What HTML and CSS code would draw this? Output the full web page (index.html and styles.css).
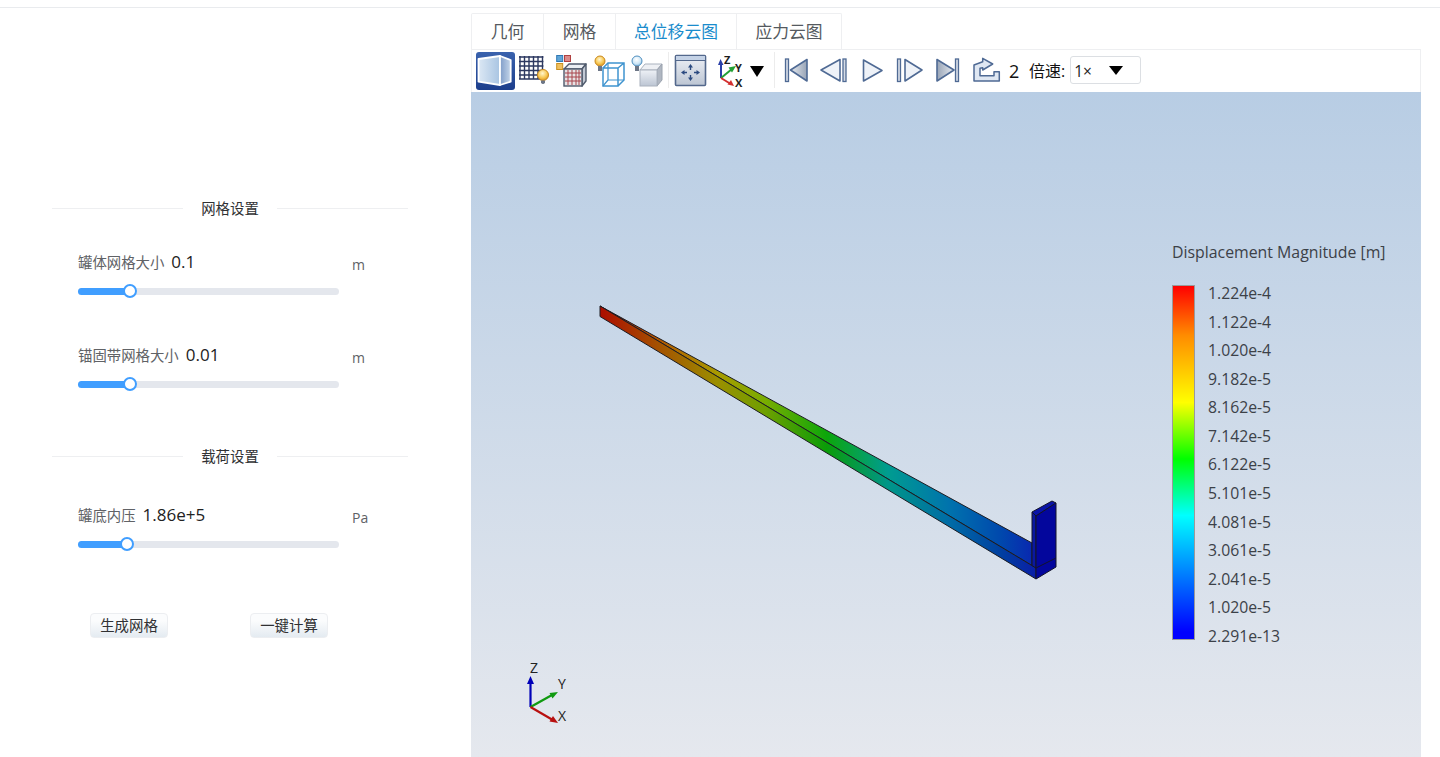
FILE: index.html
```html
<!DOCTYPE html>
<html lang="zh">
<head>
<meta charset="utf-8">
<title>计算</title>
<link rel="stylesheet" href="styles.css">
</head>
<body>
<div class="topbar"></div>
<div class="layout">
  <aside class="side">
    <div class="divider"><span>网格设置</span></div>
    <div class="field">
      <div class="field-main">
        <div class="field-head"><span class="field-label">罐体网格大小</span><span class="field-value">0.1</span></div>
        <div class="slider"><div class="slider-fill" style="width:20%"><i class="thumb"></i></div></div>
      </div>
      <span class="unit">m</span>
    </div>
    <div class="field field-next">
      <div class="field-main">
        <div class="field-head"><span class="field-label">锚固带网格大小</span><span class="field-value">0.01</span></div>
        <div class="slider"><div class="slider-fill" style="width:20%"><i class="thumb"></i></div></div>
      </div>
      <span class="unit">m</span>
    </div>
    <div class="divider divider-load"><span>载荷设置</span></div>
    <div class="field field-load">
      <div class="field-main">
        <div class="field-head"><span class="field-label">罐底内压</span><span class="field-value">1.86e+5</span></div>
        <div class="slider"><div class="slider-fill" style="width:18.8%"><i class="thumb"></i></div></div>
      </div>
      <span class="unit">Pa</span>
    </div>
    <div class="actions">
      <button class="btn">生成网格</button>
      <button class="btn">一键计算</button>
    </div>
  </aside>

  <main class="stage">
    <nav class="tabs">
      <a class="tab tab-f">几何</a>
      <a class="tab tab-s">网格</a>
      <a class="tab tab-m active">总位移云图</a>
      <a class="tab tab-l">应力云图</a>
    </nav>
    <div class="toolbar">
      <span class="tool tool-active">
        <svg viewBox="0 0 39 38" width="39" height="38">
          <defs>
            <linearGradient id="gL" x1="0" x2="1" y1="0" y2="0"><stop offset="0" stop-color="#dce8f4"/><stop offset="1" stop-color="#a8c4e2"/></linearGradient>
            <linearGradient id="gR" x1="0" x2="1" y1="0" y2="0"><stop offset="0" stop-color="#7f9cc8"/><stop offset="1" stop-color="#c5d6ea"/></linearGradient>
            <linearGradient id="gMed" x1="0" x2="1" y1="0" y2="0"><stop offset="0" stop-color="#e6eaf0"/><stop offset="1" stop-color="#98a4b6"/></linearGradient>
            <linearGradient id="gMedR" x1="0" x2="1" y1="0" y2="0"><stop offset="0" stop-color="#98a4b6"/><stop offset="1" stop-color="#e6eaf0"/></linearGradient>
            <linearGradient id="gBox" x1="0" x2="0" y1="0" y2="1"><stop offset="0" stop-color="#eef1f6"/><stop offset="1" stop-color="#bcc5d3"/></linearGradient>
            <radialGradient id="gBulb" cx=".45" cy=".35" r=".7"><stop offset="0" stop-color="#fff6cf"/><stop offset=".6" stop-color="#f7c64f"/><stop offset="1" stop-color="#d48a1c"/></radialGradient>
            <radialGradient id="gBulbB" cx=".45" cy=".35" r=".7"><stop offset="0" stop-color="#fff"/><stop offset=".6" stop-color="#cfe7f7"/><stop offset="1" stop-color="#7fb2d8"/></radialGradient>
            <linearGradient id="rainbowBeam" gradientUnits="userSpaceOnUse" x1="600" y1="0" x2="1036" y2="0">
              <stop offset="0" stop-color="#ac0d00"/><stop offset=".13" stop-color="#a55000"/><stop offset=".27" stop-color="#9b8f00"/><stop offset=".38" stop-color="#6ea000"/><stop offset=".52" stop-color="#0a9c08"/><stop offset=".66" stop-color="#009688"/><stop offset=".8" stop-color="#006ca6"/><stop offset=".92" stop-color="#003fa0"/><stop offset="1" stop-color="#0a1ea6"/>
            </linearGradient>
            <linearGradient id="rainbowTop" gradientUnits="userSpaceOnUse" x1="600" y1="0" x2="1036" y2="0">
              <stop offset="0" stop-color="#b81000"/><stop offset=".13" stop-color="#b45600"/><stop offset=".27" stop-color="#a99b00"/><stop offset=".38" stop-color="#78ad00"/><stop offset=".52" stop-color="#0ca60a"/><stop offset=".66" stop-color="#009c90"/><stop offset=".8" stop-color="#0073ad"/><stop offset=".92" stop-color="#0048ad"/><stop offset="1" stop-color="#0a24b0"/>
            </linearGradient>
          </defs>
          <path d="M2.500 7 24 4V33L2.500 29.700Z" fill="url(#gL)" stroke="#fff" stroke-width="1.800" stroke-linejoin="round"/>
          <path d="M24 4 34.700 8V29.700L24 33Z" fill="url(#gR)" stroke="#fff" stroke-width="1.800" stroke-linejoin="round"/>
        </svg>
      </span>
      <span class="tool">
        <svg viewBox="0 0 38 38" width="38" height="38">
          <path d="M5 4V27M9.500 4V27M14 4V27M18.500 4V27M23 4V27M27.500 4V27M4 5H28.500M4 9.500H28.500M4 14H28.500M4 18.500H28.500M4 23H28.500M4 27H28.500" stroke="#2c3860" stroke-width="1.400" fill="none"/>
          <circle cx="28" cy="23" r="5.500" fill="url(#gBulb)" stroke="#c9891f"/>
          <path d="M26 28.500H30V31L28.500 32H27.500L26 31Z" fill="#6d7686"/>
        </svg>
      </span>
      <span class="tool">
        <svg viewBox="0 0 38 38" width="38" height="38">
          <rect x="3.700" y="3.500" width="6" height="6" fill="#5fa5d8" stroke="#2f78b3"/>
          <rect x="11.500" y="3.500" width="6" height="6" fill="#d98a8a" stroke="#b04040"/>
          <rect x="3.700" y="11.500" width="6" height="6" fill="#f0c060" stroke="#c98f20"/>
          <path d="M11 17 16 12H33L29 17Z" fill="#eceff4" stroke="#4f5a6c" stroke-width="1.400" stroke-linejoin="round"/>
          <path d="M29 17 33 12V29L29 34Z" fill="#c2c9d4" stroke="#4f5a6c" stroke-width="1.400" stroke-linejoin="round"/>
          <rect x="11" y="17" width="18" height="17" fill="#e6e2e4" stroke="#4f5a6c" stroke-width="1.400"/>
          <path d="M15 18V33M19 18V33M23 18V33M26 18V33M12 21H28M12 25H28M12 29H28" stroke="#a8454d" stroke-width="1"/>
        </svg>
      </span>
      <span class="tool">
        <svg viewBox="0 0 38 38" width="38" height="38">
          <path d="M12 16H27V34H12ZM12 16 17 11H33V28L27 34M27 16 33 11" fill="none" stroke="#3f94cf" stroke-width="1.500"/>
          <path d="M17 11V28H33M17 28 12 34" fill="none" stroke="#3f94cf" stroke-width="1.200"/>
          <circle cx="9" cy="9" r="5" fill="url(#gBulb)" stroke="#c9891f"/>
          <rect x="7" y="14" width="4" height="5" fill="#6d7686"/>
        </svg>
      </span>
      <span class="tool">
        <svg viewBox="0 0 38 38" width="38" height="38">
          <path d="M11 18 16 12H33L28 18Z" fill="#eef0f4" stroke="#aab2be"/>
          <path d="M28 18 33 12V28L28 34Z" fill="#b0b7c2" stroke="#9aa2ae"/>
          <rect x="11" y="18" width="17" height="16" fill="url(#gBox)" stroke="#aab2be"/>
          <circle cx="8" cy="9" r="5" fill="url(#gBulbB)" stroke="#4f8fbf"/>
          <rect x="6" y="14" width="4" height="5" fill="#6d7686"/>
        </svg>
      </span>
      <span class="tool-sep"></span>
      <span class="tool">
        <svg viewBox="0 0 38 38" width="38" height="38">
          <rect x="3.500" y="3.500" width="30" height="30" rx="1" fill="url(#gBox)" stroke="#53688c" stroke-width="1.600"/>
          <rect x="4" y="4" width="29" height="4" fill="#c4d2e6"/>
          <path d="M3.500 8.500H33.500" stroke="#53688c"/>
          <path d="M18.500 12 16 15.500H17.800V18H19.200V15.500H21ZM18.500 29 16 25.500H17.800V23H19.200V25.500H21ZM9 20.500 12.500 18V19.800H15V21.200H12.500V23ZM28 20.500 24.500 18V19.800H22V21.200H24.500V23Z" fill="#2b4a80"/>
        </svg>
      </span>
      <span class="tool tool-axis">
        <svg viewBox="0 0 61 38" width="61" height="38">
          <path d="M9 26V11" stroke="#2a3fa8" stroke-width="2"/>
          <path d="M8.500 7 6 13H11.500Z" fill="#2a3fa8"/>
          <path d="M9 26 20 17" stroke="#23a035" stroke-width="2"/>
          <path d="M24 14 16.500 15.500 20 20.500Z" fill="#23a035"/>
          <path d="M9 26 18 31.500" stroke="#d32f2f" stroke-width="2"/>
          <path d="M22 34 19 28 15.500 32.500Z" fill="#d32f2f"/>
          <text class="axis-t" x="12" y="12">Z</text>
          <text class="axis-t" x="23" y="19.500">Y</text>
          <text class="axis-t" x="23" y="34.500">X</text>
          <path d="M38 14H52L45 25Z" fill="#000"/>
        </svg>
      </span>
      <span class="tool-sep tool-sep-b"></span>
      <span class="tool">
        <svg viewBox="0 0 38 38" width="38" height="38">
          <rect x="8.500" y="7" width="3" height="22.500" fill="#d5dbe5" stroke="#4f6a94" stroke-width="1.300"/>
          <path d="M30 7.500V29L13.500 18Z" fill="url(#gMed)" stroke="#4f6a94" stroke-width="1.600" stroke-linejoin="round"/>
        </svg>
      </span>
      <span class="tool">
        <svg viewBox="0 0 38 38" width="38" height="38">
          <rect x="28" y="7" width="3" height="22.500" fill="#d5dbe5" stroke="#4f6a94" stroke-width="1.300"/>
          <path d="M25 7.500V29L6 18Z" fill="#eef2f8" stroke="#4f6a94" stroke-width="1.600" stroke-linejoin="round"/>
        </svg>
      </span>
      <span class="tool">
        <svg viewBox="0 0 38 38" width="38" height="38">
          <path d="M10.500 8V29L29 18.500Z" fill="#eef2f8" stroke="#4f6a94" stroke-width="1.600" stroke-linejoin="round"/>
        </svg>
      </span>
      <span class="tool">
        <svg viewBox="0 0 38 38" width="38" height="38">
          <rect x="6.500" y="7" width="3" height="22.500" fill="#d5dbe5" stroke="#4f6a94" stroke-width="1.300"/>
          <path d="M14 7.500V29L31 18Z" fill="#eef2f8" stroke="#4f6a94" stroke-width="1.600" stroke-linejoin="round"/>
        </svg>
      </span>
      <span class="tool">
        <svg viewBox="0 0 38 38" width="38" height="38">
          <rect x="26.500" y="7" width="3" height="22.500" fill="#d5dbe5" stroke="#4f6a94" stroke-width="1.300"/>
          <path d="M8 7.500V29L25 18Z" fill="url(#gMedR)" stroke="#4f6a94" stroke-width="1.600" stroke-linejoin="round"/>
        </svg>
      </span>
      <span class="tool">
        <svg viewBox="0 0 38 38" width="38" height="38">
          <path d="M25.700 12 15.700 6.300V9.700L7 13V29H32.300V19.700H27V23.700H13V16.300L15.700 15.700V18Z" fill="#dfe7f2" stroke="#4f6a94" stroke-width="1.500" stroke-linejoin="round"/>
        </svg>
      </span>
      <span class="frame-no">2</span>
      <span class="speed-label">倍速:</span>
      <div class="speed-select"><span>1×</span><i class="caret"></i></div>
    </div>
    <section class="viewport">
      <svg class="scene" viewBox="471 92 950 665" width="950" height="665">
        <path d="M600 306 1032 543V565.500Z" fill="url(#rainbowTop)" stroke="#1c1c22" stroke-linejoin="round"/>
        <path d="M600 306 1036 568V579L600 316.500Z" fill="url(#rainbowBeam)" stroke="#1c1c22" stroke-linejoin="round"/>
        <path d="M1032 512 1036 516V568L1032 565.500Z" fill="#0a18a0" stroke="#14142a"/>
        <path d="M1032 512 1052 501 1056 503 1036 516Z" fill="#0a14a8" stroke="#14142a" stroke-linejoin="round"/>
        <path d="M1036 516 1056 503V567L1036 579Z" fill="#03069c" stroke="#14142a" stroke-linejoin="round"/>
        <path d="M1036 568 1056 558" stroke="#14142a" fill="none"/>

        <path d="M530.500 707V682" stroke="#0000b8" stroke-width="2.200"/>
        <path d="M530.500 676 527 684H534Z" fill="#0000b8"/>
        <path d="M530.500 707 552 695" stroke="#109a10" stroke-width="2.200"/>
        <path d="M558 692 549.500 693 552.500 698.500Z" fill="#109a10"/>
        <path d="M530.500 707 552 719.500" stroke="#b81010" stroke-width="2.200"/>
        <path d="M558 723 553 716 549.500 721.500Z" fill="#b81010"/>
        <text class="gizmo-t" x="530" y="673">Z</text>
        <text class="gizmo-t" x="558" y="689">Y</text>
        <text class="gizmo-t" x="558" y="721">X</text>
      </svg>
      <div class="legend">
        <div class="legend-title">Displacement Magnitude [m]</div>
        <div class="legend-body">
          <div class="legend-bar"></div>
          <div class="legend-labels">
            <span>1.224e-4</span><span>1.122e-4</span><span>1.020e-4</span><span>9.182e-5</span><span>8.162e-5</span><span>7.142e-5</span><span>6.122e-5</span><span>5.101e-5</span><span>4.081e-5</span><span>3.061e-5</span><span>2.041e-5</span><span>1.020e-5</span><span>2.291e-13</span>
          </div>
        </div>
      </div>
    </section>
  </main>
</div>
</body>
</html>
```
FILE: styles.css
```css
* { box-sizing: border-box; }
html, body { margin: 0; height: 757px; overflow: hidden; background: #fff; }
body { font-family: "Open Sans", "Noto Sans CJK SC", sans-serif; color: #303133; }

.topbar { height: 8px; border-bottom: 1px solid #e9ebee; }
.layout { display: flex; height: 749px; }

/* left form */
.side { width: 471px; flex: none; padding-top: 190px; }
.divider { height: 20px; margin: 0 63px 32px 52px; display: flex; align-items: center; justify-content: center; }
.divider::before, .divider::after { content: ""; flex: 1; height: 1px; background: #eeeff1; }
.divider span { width: 94px; padding-top: 2px; font-size: 14.4px; line-height: 20px; color: #303133; text-align: center; }
.divider-load { margin-top: 52px; margin-bottom: 37px; }

.field { display: flex; margin-left: 78px; }
.field-next { margin-top: 42px; }
.field-main { width: 261px; }
.field-head { height: 24px; padding-bottom: 2px; display: flex; align-items: center; gap: 7px; }
.field-label { font-size: 14.4px; color: #606266; }
.field-value { font-size: 17px; color: #222; }
.unit { margin: 5px 0 0 13px; font-size: 14px; line-height: 20px; color: #606266; }

.slider { margin: 14px 0 6px; height: 7px; border-radius: 4px; background: #e4e7ed; }
.slider-fill { position: relative; height: 7px; border-radius: 4px 0 0 4px; background: #409eff; }
.thumb { position: absolute; right: -7px; top: -4px; width: 14px; height: 14px; border-radius: 50%; background: #fff; border: 2px solid #409eff; }

.actions { margin: 59px 0 0 90px; display: flex; gap: 82px; }
.btn { width: 78px; height: 25px; padding: 0 0 3px; border: 1px solid #eceef1; border-radius: 4px; background: linear-gradient(#fbfcfd 30%, #e4ebf1); font: inherit; font-size: 14.4px; color: #303133; }

/* right stage */
.stage { width: 950px; flex: none; display: flex; flex-direction: column; }
.tabs { display: flex; margin-top: 5px; height: 36px; }
.tab { height: 36px; border: 1px solid #eeeff1; border-left: 0; border-bottom: 0; font-size: 16.8px; line-height: 36px; color: #555a60; text-align: center; }
.tab-f { width: 73px; border-left: 1px solid #eeeff1; border-radius: 2px 0 0 0; }
.tab-s { width: 72px; }
.tab-m { width: 121px; }
.tab-l { width: 105px; border-radius: 0 2px 0 0; }
.tab.active { color: #1a8ccc; }

.toolbar { height: 43px; display: flex; align-items: flex-start; padding: 2px 0 0 4px; border: 1px solid #eeeff1; border-left-color: #f2f2f2; border-bottom: 0; }
.tool { display: block; width: 38px; height: 38px; flex: none; }
.tool svg { display: block; }
.tool-active { width: 39px; border-radius: 3px; background: linear-gradient(#3a62ad, #1c3e8c); }
.tool-sep { width: 1px; height: 36px; margin: 0 3px 0 1px; background: #ececec; flex: none; }
.tool-sep-b { margin: 0 2px 0 1px; }
.tool-axis { width: 61px; margin-left: 2px; }
.axis-t { font-size: 11px; font-weight: 700; fill: #1d1d1d; }
.frame-no { margin-left: 4px; width: 20px; font-size: 18px; line-height: 38px; color: #111; }
.speed-label { font-size: 16px; line-height: 38px; color: #111; white-space: nowrap; }
.speed-select { position: relative; margin: 4px 0 0 5px; width: 71px; height: 28px; border: 1px solid #dcdfe3; border-radius: 3px; font-size: 15.5px; line-height: 28px; padding-left: 3px; color: #222; }
.caret { position: absolute; left: 38px; top: 9px; width: 0; height: 0; border-left: 7px solid transparent; border-right: 7px solid transparent; border-top: 9px solid #000; }

.viewport { position: relative; flex: 1; background: linear-gradient(#b8cde4, #e5e8ee); overflow: hidden; }
.scene { position: absolute; left: 0; top: 0; }
.gizmo-t { font-size: 14px; fill: #222; }
.legend { position: absolute; left: 701px; top: 148px; color: #3c4148; }
.legend-title { font-size: 15.85px; line-height: 24px; white-space: nowrap; }
.legend-body { display: flex; gap: 13px; margin-top: 21px; }
.legend-bar { width: 23px; height: 355px; border: 1px solid #9a9a9a; background: linear-gradient(#ff0000 0, #ff8c00 14%, #ffff00 33%, #00ff00 49%, #00ffff 65%, #0000ff 98%, #0000ff 100%); }
.legend-labels { display: flex; flex-direction: column; justify-content: space-between; height: 363px; margin-top: -2px; font-size: 15.75px; line-height: 20px; }
```
